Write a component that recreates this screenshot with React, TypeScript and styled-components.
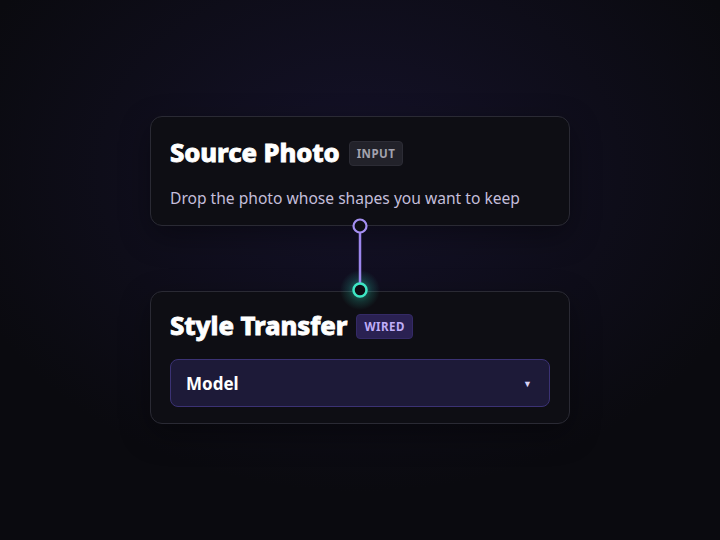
import React from "react";
import styled, { createGlobalStyle } from "styled-components";

const Global = createGlobalStyle`
  html, body { margin: 0; padding: 0; height: 100%; }
  body {
    background: #0a0a0f;
    font-family: "Noto Sans", "Open Sans", sans-serif;
  }
  #root { height: 100%; }
`;

const Stage = styled.div`
  width: 720px;
  height: 540px;
  display: flex;
  align-items: center;
  justify-content: center;
  background:
    radial-gradient(ellipse 420px 320px at 50% 32%, rgba(40, 32, 90, 0.35), rgba(10, 10, 15, 0) 100%),
    #0a0a0f;
`;

const Column = styled.div`
  width: 420px;
  display: flex;
  flex-direction: column;
  align-items: stretch;
`;

const Card = styled.div<{ $tight?: boolean }>`
  position: relative;
  z-index: 1;
  box-sizing: border-box;
  background: #0e0e14;
  border: 1px solid #2a2a34;
  border-radius: 12px;
  padding: ${(p) => (p.$tight ? "17px 19px 16px" : "19px 19px 16px")};
  display: flex;
  flex-direction: column;
  gap: ${(p) => (p.$tight ? "16px" : "17px")};
  box-shadow: 0 10px 30px rgba(0, 0, 0, 0.35);
`;

const TitleRow = styled.div`
  display: flex;
  align-items: center;
  gap: 9px;
`;

const Title = styled.h2`
  margin: 0;
  font-family: "Noto Sans", sans-serif;
  font-weight: 800;
  font-size: 25.6px;
  line-height: 34px;
  color: #ffffff;
  -webkit-text-stroke: 0.8px #ffffff;
  letter-spacing: -0.1px;
`;

const Badge = styled.span<{ $tone: "gray" | "purple" }>`
  display: inline-flex;
  align-items: center;
  height: 25px;
  padding: 0 7px;
  border-radius: 4px;
  font-family: "Noto Sans", sans-serif;
  font-size: 11.5px;
  font-weight: 700;
  letter-spacing: 0.5px;
  background: ${(p) => (p.$tone === "gray" ? "#22222a" : "#2a2152")};
  color: ${(p) => (p.$tone === "gray" ? "#a3a2ae" : "#c0aef8")};
  border: 1px solid ${(p) => (p.$tone === "gray" ? "#2c2c35" : "#342a66")};
  box-sizing: border-box;
`;

const Desc = styled.p`
  margin: 0;
  font-family: "Noto Sans", sans-serif;
  font-size: 15.6px;
  line-height: 22px;
  color: #c4bedb;
`;

const Select = styled.div`
  box-sizing: border-box;
  height: 48px;
  border-radius: 8px;
  background: #1d1a38;
  border: 1px solid #3b3274;
  display: flex;
  align-items: center;
  justify-content: space-between;
  padding: 0 17px 0 15px;
`;

const SelectLabel = styled.span`
  font-family: "Noto Sans", sans-serif;
  font-weight: 700;
  font-size: 17px;
  color: #ffffff;
`;

const Caret = styled.span`
  font-size: 9px;
  color: #d8d2f4;
`;

const Link = styled.div`
  position: relative;
  z-index: 2;
  height: 65px;
  display: flex;
  justify-content: center;
`;

const LinkSvg = styled.svg`
  position: absolute;
  top: -9px;
  left: 50%;
  transform: translateX(-50%);
  overflow: visible;
`;

export default function App() {
  return (
    <>
      <Global />
      <Stage>
        <Column>
          <Card>
            <TitleRow>
              <Title>Source Photo</Title>
              <Badge $tone="gray">INPUT</Badge>
            </TitleRow>
            <Desc>Drop the photo whose shapes you want to keep</Desc>
          </Card>
          <Link>
            <LinkSvg width="30" height="83" viewBox="0 0 30 83">
              <defs>
                <radialGradient id="glow">
                  <stop offset="0%" stopColor="#2fe0c0" stopOpacity="0.5" />
                  <stop offset="60%" stopColor="#2fe0c0" stopOpacity="0.15" />
                  <stop offset="100%" stopColor="#2fe0c0" stopOpacity="0" />
                </radialGradient>
              </defs>
              <circle cx="15" cy="73" r="20" fill="url(#glow)" />
              <line x1="15" y1="16" x2="15" y2="66" stroke="#9c86ec" strokeWidth="2.5" />
              <circle cx="15" cy="9" r="6.5" fill="#0e0e14" stroke="#a48ff0" strokeWidth="2.2" />
              <circle cx="15" cy="73" r="6.5" fill="#0e0e14" stroke="#3ee6c4" strokeWidth="2.5" />
            </LinkSvg>
          </Link>
          <Card $tight>
            <TitleRow>
              <Title>Style Transfer</Title>
              <Badge $tone="purple">WIRED</Badge>
            </TitleRow>
            <Select>
              <SelectLabel>Model</SelectLabel>
              <Caret>▼</Caret>
            </Select>
          </Card>
        </Column>
      </Stage>
    </>
  );
}
